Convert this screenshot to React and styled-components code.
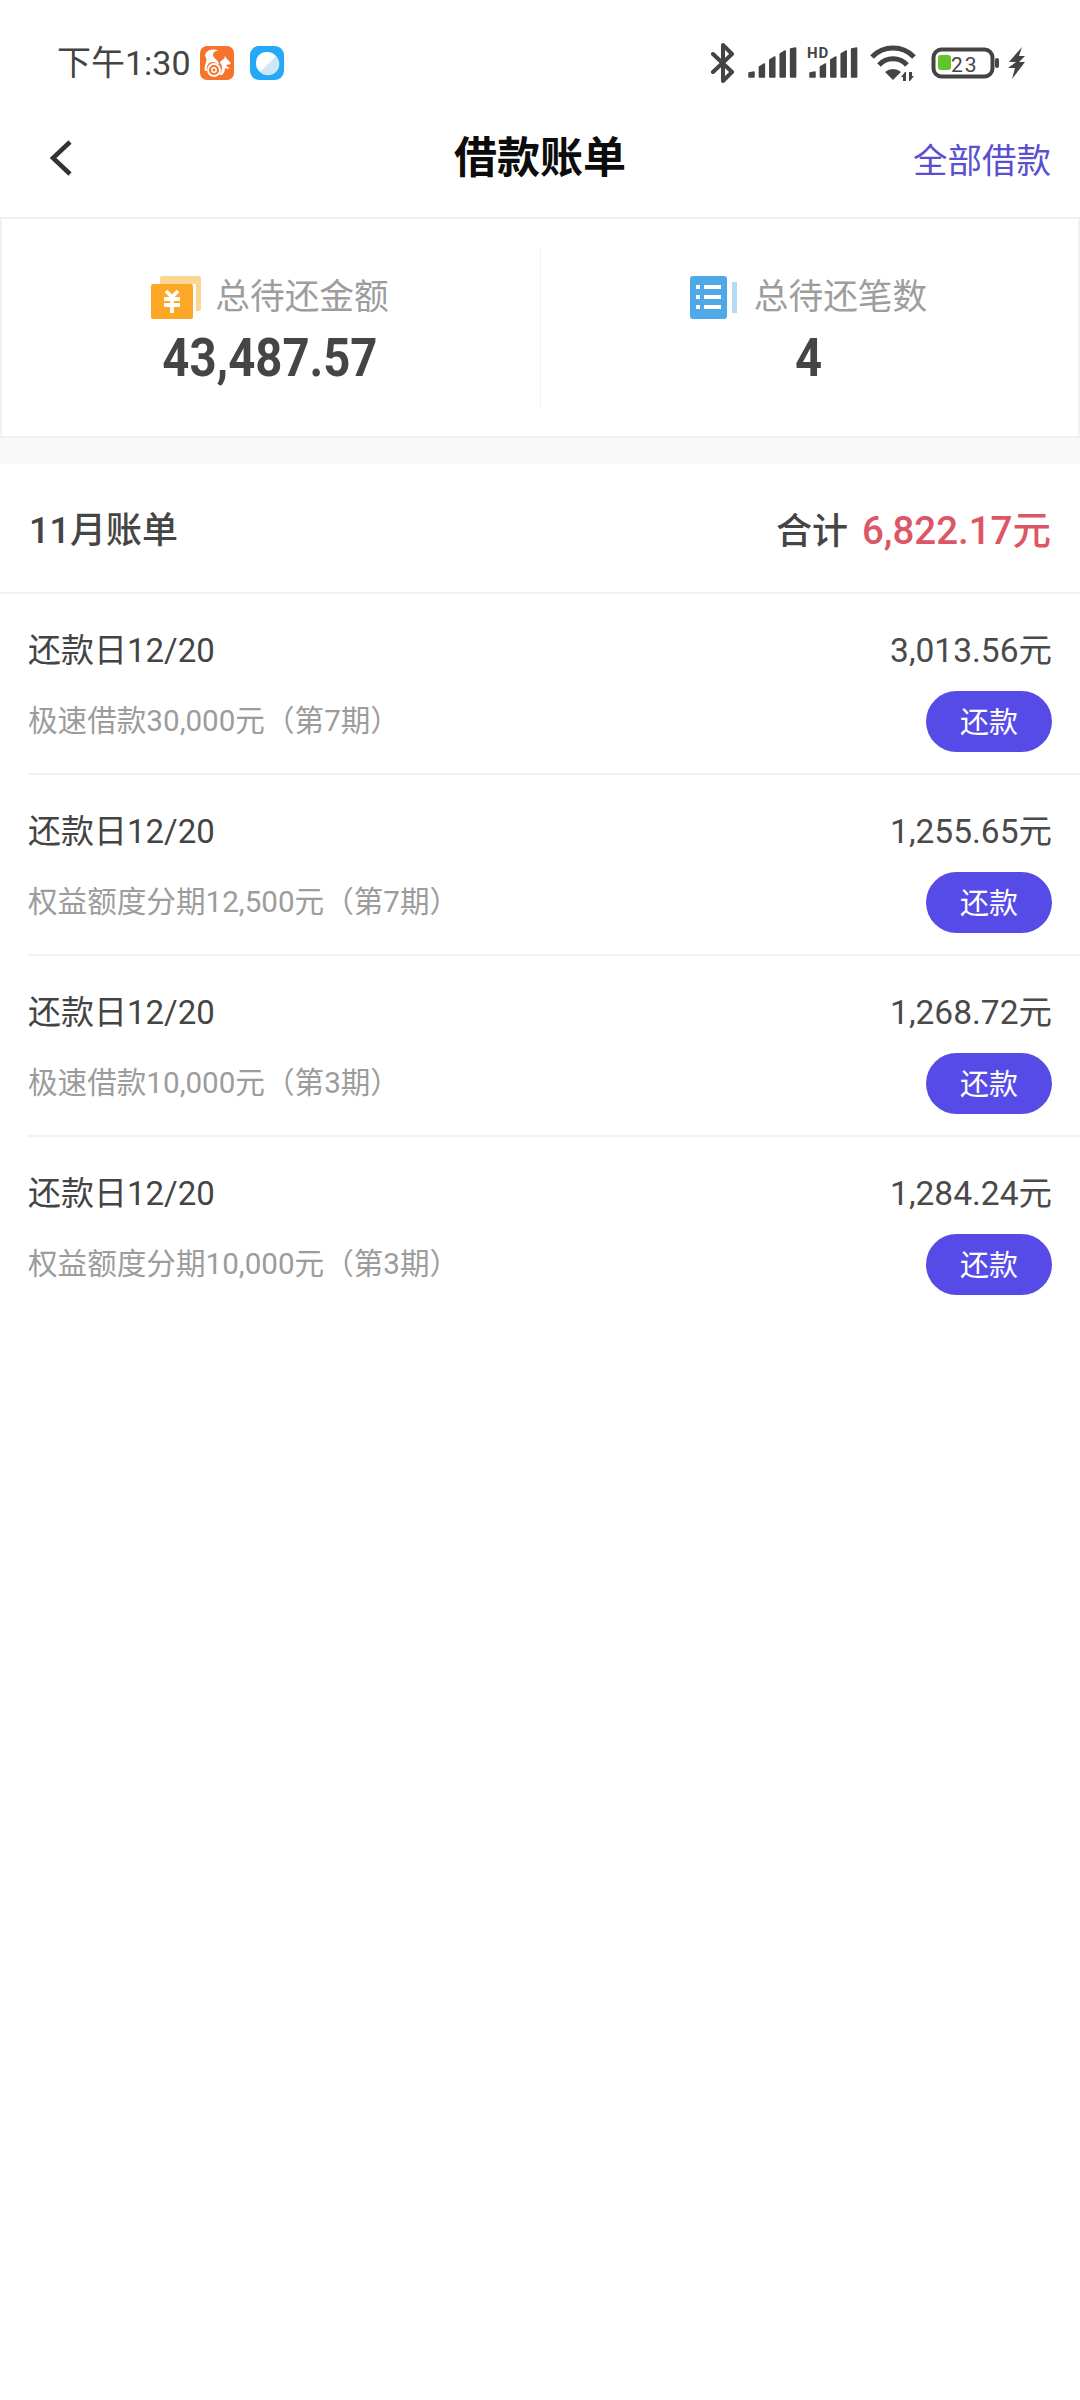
import React from 'react'
import styled, { createGlobalStyle } from 'styled-components'

const Global = createGlobalStyle`
  html, body { margin: 0; padding: 0; background: #fff; }
  * { box-sizing: border-box; }
  body { font-family: Roboto, "Noto Sans CJK SC", sans-serif; }
`

const Page = styled.div`
  width: 1080px;
  min-height: 2400px;
  background: #fff;
`

const StatusBar = styled.div`
  height: 98px;
  padding: 38px 0 10px 57px;
  display: flex;
  justify-content: space-between;
  align-items: center;
`

const StatusLeft = styled.div`
  display: flex;
  align-items: center;
`

const Time = styled.span`
  font-size: 34px;
  color: #444;
  line-height: 50px;
`

const AppIcon = styled.svg`
  width: 34px;
  height: 34px;
  margin-left: ${p => p.$gap}px;
  display: block;
`

const StatusRight = styled.div`
  display: flex;
  align-items: center;
  padding-right: 54px;
`

const StatusIcon = styled.svg`
  display: block;
  height: 40px;
  width: ${p => p.$w}px;
  margin-left: ${p => p.$gap}px;
`

const Nav = styled.header`
  height: 119px;
  padding: 0 29px;
  display: grid;
  grid-template-columns: 1fr auto 1fr;
  align-items: center;
`

const BackIcon = styled.svg`
  width: 26px;
  height: 38px;
  margin-left: 19px;
  display: block;
`

const Title = styled.h1`
  margin: 0;
  font-size: 43px;
  font-weight: 700;
  color: #0c0c0c;
  line-height: 60px;
`

const NavLink = styled.a`
  justify-self: end;
  font-size: 34.5px;
  color: #5a4fd0;
`

const Summary = styled.section`
  height: 221px;
  border: 2px solid #f1f1f1;
  padding: 28px 0;
  display: grid;
  grid-template-columns: 1fr 1fr;
`

const SummaryCell = styled.div`
  display: flex;
  flex-direction: column;
  align-items: center;
  padding-top: 28px;
  border-left: ${p => (p.$divider ? '1px solid #f1f1f1' : 'none')};
`

const SummaryLabel = styled.div`
  display: flex;
  align-items: center;
  height: 44px;
  gap: 14px;
  margin-left: -2px;
  font-size: 34.7px;
  color: #9d9d9d;
  line-height: 44px;
`

const SummaryIcon = styled.svg`
  width: 50px;
  height: 43px;
  display: block;
`

const SummaryValue = styled.div`
  margin-top: 7px;
  margin-left: -2px;
  font-size: 54px;
  font-weight: 700;
  line-height: 64px;
  color: #454545;
  transform: scaleX(0.875);
`

const Band = styled.div`
  height: 26px;
  background: #f8f8f8;
`

const MonthHeader = styled.div`
  height: 130px;
  padding: 0 29px 3px;
  border-bottom: 2px solid #f2f2f2;
  display: flex;
  justify-content: space-between;
  align-items: center;
  font-size: 36px;
  font-weight: 500;
  color: #454545;
`

const Total = styled.div`
  display: flex;
  align-items: baseline;
  gap: 14px;
`

const TotalAmount = styled.span`
  font-size: 38.5px;
  color: #dd5666;
`

const Bill = styled.div`
  height: 181px;
  margin-left: 28px;
  padding: 18px 28px 0 0;
  border-bottom: ${p => (p.$last ? 'none' : '2px solid #f2f2f2')};
  display: grid;
  grid-template-columns: 1fr auto;
  grid-template-rows: 72px 74px;
  align-items: center;
`

const BillDate = styled.div`
  font-size: 33px;
  color: #444;
`

const BillAmount = styled.div`
  justify-self: end;
  margin-bottom: 2px;
  font-size: 33.5px;
  color: #4a4a4a;
`

const BillDesc = styled.div`
  margin-bottom: 6px;
  font-size: 29.6px;
  color: #9c9c9c;
`

const PayButton = styled.button`
  justify-self: end;
  width: 126px;
  height: 61px;
  border: none;
  border-radius: 31px;
  background: #574be8;
  color: #fff;
  padding: 4px 0 0;
  font-family: inherit;
  font-size: 29px;
  line-height: 57px;
`

const bills = [
  { amount: '3,013.56元', desc: '极速借款30,000元（第7期）' },
  { amount: '1,255.65元', desc: '权益额度分期12,500元（第7期）' },
  { amount: '1,268.72元', desc: '极速借款10,000元（第3期）' },
  { amount: '1,284.24元', desc: '权益额度分期10,000元（第3期）' },
]

function SignalBars({ x = 0 }) {
  const tops = [[30, 29], [24, 21], [17, 14], [11, 8], [6, 5]]
  return (
    <g fill="#444" stroke="#444" strokeWidth="1.5" strokeLinejoin="round">
      {tops.map((t, i) => {
        const left = x + 1 + i * 10.4
        return <polygon key={i} points={`${left},34 ${left},${t[0]} ${left + 5},${t[1]} ${left + 5},34`} />
      })}
    </g>
  )
}

function App() {
  return (
    <Page>
      <Global />
      <StatusBar>
        <StatusLeft>
          <Time>下午1:30</Time>
          <AppIcon $gap={9} viewBox="0 0 34 34">
            <rect width="34" height="34" rx="7" fill="#f5732b" />
            <path d="M8 5c3-2 8-2 10 0-3 0-5 1-5 4 0 3 4 4 6 8l-1 2c-1-2-3-3-5-3-5 0-7 4-6 9H5C3 19 9 15 5 10c0-2 1-4 3-5z" fill="#fff" />
            <circle cx="14" cy="24" r="6" fill="none" stroke="#fff" strokeWidth="1.8" />
            <circle cx="14" cy="24" r="2.2" fill="none" stroke="#fff" strokeWidth="1.4" />
            <path d="M20 17c1-3 3-4 4-4l1-3 2 3 3 3 1 2-5 1c1 2 3 3 4 3-2 1-4 1-5 0 0 3-1 5-3 7h-3c2-2 3-5 3-8 0-2-1-3-2-4z" fill="#fff" />
          </AppIcon>
          <AppIcon $gap={16} viewBox="0 0 34 34">
            <rect width="34" height="34" rx="9" fill="#25a9f6" />
            <rect x="6" y="6" width="22" height="22" rx="10" fill="#fff" />
            <path d="M26 10a10 10 0 0 1-16 16z" fill="#cfe6f6" />
          </AppIcon>
        </StatusLeft>
        <StatusRight>
          <StatusIcon $w={26} $gap={0} viewBox="0 0 26 40">
            <path d="M3 11l19 18-9 9V2l9 9-19 18" fill="none" stroke="#444" strokeWidth="4" strokeLinejoin="round" strokeLinecap="round" />
          </StatusIcon>
          <StatusIcon $w={50} $gap={12} viewBox="0 0 50 40">
            <SignalBars />
          </StatusIcon>
          <StatusIcon $w={51} $gap={9} viewBox="0 0 51 40">
            <SignalBars x={2} />
            <text x="0" y="15" fontSize="15" fontWeight="700" letterSpacing="0.8" fill="#444" fontFamily="Roboto, sans-serif">HD</text>
          </StatusIcon>
          <StatusIcon $w={48} $gap={11} viewBox="0 0 48 40">
            <g fill="none" stroke="#444" strokeWidth="5">
              <path d="M3 14a29 29 0 0 1 42 0" />
              <path d="M10 22a19 19 0 0 1 28 0" />
            </g>
            <path d="M24 37l-8-8a12 12 0 0 1 16 0z" fill="#444" />
            <path d="M36 29l-4 5h2v4h3v-9zM41 38l4-5h-2v-4h-3v9z" fill="#444" />
          </StatusIcon>
          <StatusIcon $w={71} $gap={13} viewBox="0 0 71 40">
            <rect x="3.5" y="6.5" width="59" height="27" rx="8" fill="none" stroke="#444" strokeWidth="4" />
            <rect x="8" y="12" width="13" height="15" rx="3" fill="#5fc52b" />
            <text x="21" y="29" fontSize="21" letterSpacing="2" fill="#444" fontFamily="Roboto, sans-serif">23</text>
            <rect x="65" y="15" width="4" height="10" rx="2" fill="#444" />
          </StatusIcon>
          <StatusIcon $w={19} $gap={6} viewBox="0 0 19 40">
            <path d="M15 4L2 19h7l-8 6h7L5 36l13-17h-6l6-6h-6z" fill="#444" />
          </StatusIcon>
        </StatusRight>
      </StatusBar>

      <Nav>
        <BackIcon viewBox="0 0 26 38">
          <path d="M22 3L5 19l17 16" fill="none" stroke="#333" strokeWidth="4.5" />
        </BackIcon>
        <Title>借款账单</Title>
        <NavLink>全部借款</NavLink>
      </Nav>

      <Summary>
        <SummaryCell>
          <SummaryLabel>
            <SummaryIcon viewBox="0 0 50 43">
              <path d="M9 2a2 2 0 0 1 2-2h37a2 2 0 0 1 2 2v31a2 2 0 0 1-2 2h-3V8H9z" fill="#fbd592" />
              <rect y="8" width="42" height="35" rx="2" fill="#fda726" />
              <path d="M15 15l6 6 6-6M13 23h16M13 29h16M21 21v16" fill="none" stroke="#fff" strokeWidth="3.8" />
            </SummaryIcon>
            总待还金额
          </SummaryLabel>
          <SummaryValue>43,487.57</SummaryValue>
        </SummaryCell>
        <SummaryCell $divider>
          <SummaryLabel>
            <SummaryIcon viewBox="0 0 50 43">
              <rect width="37" height="43" rx="3" fill="#4fa8e8" />
              <rect x="42" y="6" width="5" height="31" fill="#b5dcf5" />
              <g fill="#fff">
                <rect x="6" y="9" width="4" height="4" />
                <rect x="6" y="19" width="4" height="4" />
                <rect x="6" y="29" width="4" height="4" />
                <rect x="14" y="9" width="17" height="4" />
                <rect x="14" y="19" width="17" height="4" />
                <rect x="14" y="29" width="17" height="4" />
              </g>
            </SummaryIcon>
            总待还笔数
          </SummaryLabel>
          <SummaryValue>4</SummaryValue>
        </SummaryCell>
      </Summary>

      <Band />

      <MonthHeader>
        <span>11月账单</span>
        <Total>
          <span>合计</span>
          <TotalAmount>6,822.17元</TotalAmount>
        </Total>
      </MonthHeader>

      {bills.map((bill, i) => (
        <Bill key={i} $last={i === bills.length - 1}>
          <BillDate>还款日12/20</BillDate>
          <BillAmount>{bill.amount}</BillAmount>
          <BillDesc>{bill.desc}</BillDesc>
          <PayButton>还款</PayButton>
        </Bill>
      ))}
    </Page>
  )
}

export default App
